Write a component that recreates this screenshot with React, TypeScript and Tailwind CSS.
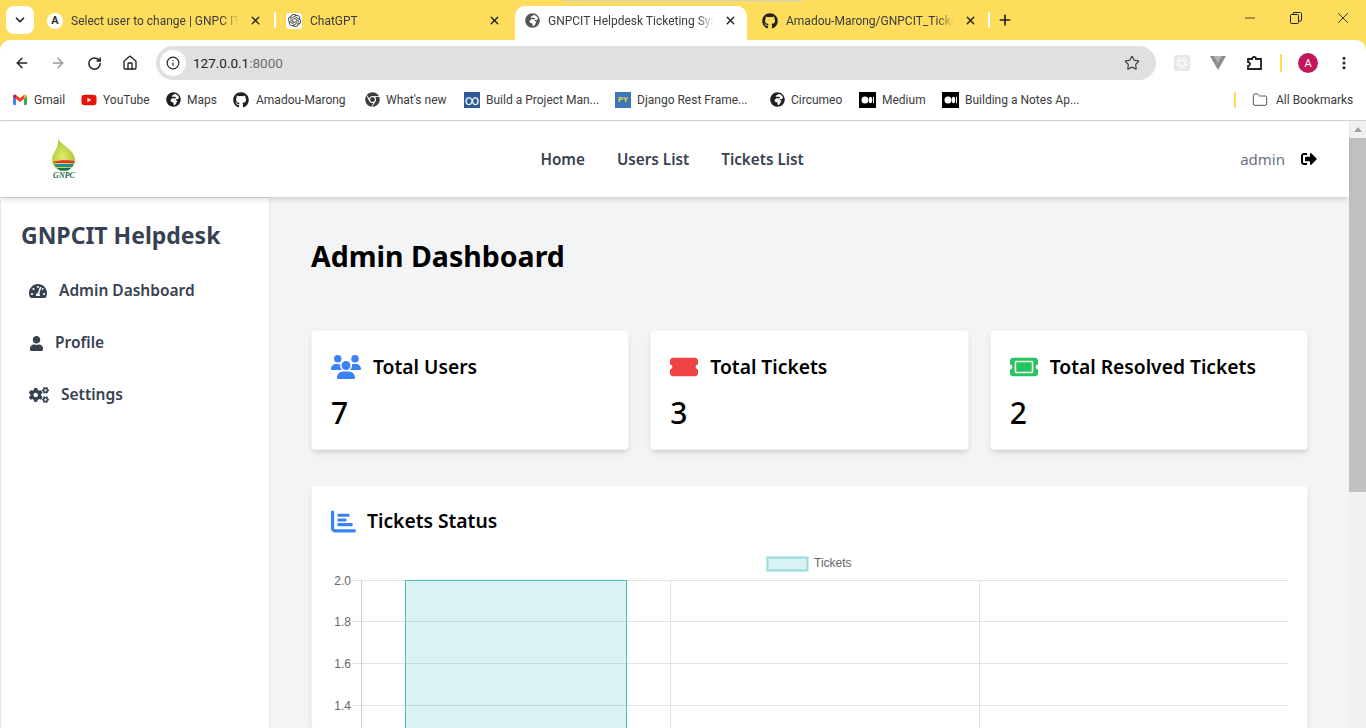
import { ReactNode } from 'react';
import {
  ArrowLeft,
  ArrowRight,
  ChevronDown,
  Folder,
  Home,
  Info,
  Minus,
  MoreVertical,
  Plus,
  RotateCw,
  Star,
  X,
} from 'lucide-react';
import {
  FaChrome,
  FaCogs,
  FaGithub,
  FaGlobeAfrica,
  FaSignOutAlt,
  FaTachometerAlt,
  FaUser,
} from 'react-icons/fa';
import { FaChartBar, FaTicket, FaTicketSimple, FaUsers, FaYoutube } from 'react-icons/fa6';
import { SiOpenai } from 'react-icons/si';

const MediumIcon = () => (
  <svg width="17" height="16" viewBox="0 0 17 16">
    <rect width="17" height="16" fill="#000" />
    <circle cx="6" cy="8" r="3.500" fill="#fff" />
    <ellipse cx="11.500" cy="8" rx="1.700" ry="3.300" fill="#fff" />
    <rect x="14" y="4.800" width="1" height="6.400" fill="#fff" />
  </svg>
);

const GlobeIcon = () => <FaGlobeAfrica size={15} className="text-[#1f1f1f]" />;

const GmailIcon = () => (
  <svg width="14" height="11" viewBox="0 0 14 11">
    <path d="M0 2v8a1 1 0 0 0 1 1h2V4z" fill="#4285f4" />
    <path d="M14 2v8a1 1 0 0 1-1 1h-2V4z" fill="#34a853" />
    <path d="M3 5V1L7 4l4-3v4L7 8z" fill="#ea4335" />
    <path d="M0 2.500C0 .8 2 0 3 1v4z" fill="#c5221f" />
    <path d="M14 2.500C14 .8 12 0 11 1v4z" fill="#fbbc04" />
  </svg>
);

const bookmarks: { label: string; width: string; gap: string; icon: ReactNode }[] = [
  { label: 'Gmail', width: 'w-[30px]', gap: 'gap-[7px]', icon: <GmailIcon /> },
  { label: 'YouTube', width: 'w-[46px]', gap: 'gap-[6px]', icon: <FaYoutube size={16} className="text-[#e8120c]" /> },
  { label: 'Maps', width: 'w-[29px]', gap: 'gap-[6px]', icon: <GlobeIcon /> },
  { label: 'Amadou-Marong', width: 'w-[92px]', gap: 'gap-[7px]', icon: <FaGithub size={16} className="text-[#1f1f1f]" /> },
  { label: "What's new", width: 'w-[61px]', gap: 'gap-[6px]', icon: <FaChrome size={15} className="text-[#3c3c3c]" /> },
  {
    label: 'Build a Project Man...',
    width: 'w-[112px]',
    gap: 'gap-[6px]',
    icon: (
      <span className="flex h-[16px] w-[16px] items-center justify-center bg-[#2f5a96] text-[14px] leading-none text-white">
        ∞
      </span>
    ),
  },
  {
    label: 'Django Rest Frame...',
    width: 'w-[116px]',
    gap: 'gap-[6px]',
    icon: (
      <span className="flex h-[16px] w-[16px] items-center justify-center bg-[#3b78b5] text-[8px] font-bold leading-none text-[#f2d14b]">
        PY
      </span>
    ),
  },
  { label: 'Circumeo', width: 'w-[51px]', gap: 'gap-[6px]', icon: <GlobeIcon /> },
  { label: 'Medium', width: 'w-[43px]', gap: 'gap-[6px]', icon: <MediumIcon /> },
  { label: 'Building a Notes Ap...', width: 'w-[114px]', gap: 'gap-[6px]', icon: <MediumIcon /> },
];

function Tab({ title, width, active, icon }: { title: string; width: string; active?: boolean; icon: ReactNode }) {
  return (
    <div className={`flex h-[34px] shrink-0 items-center pb-[5px] ${width} ${active ? 'rounded-t-[10px] bg-white' : ''}`}>
      <span className="ml-[9px] flex h-[16px] w-[16px] shrink-0 items-center justify-center">{icon}</span>
      <span className="ml-[8px] min-w-0 flex-1 whitespace-nowrap text-[12px] text-[#3b3b3b] [mask-image:linear-gradient(to_right,black_90%,transparent)]">
        {title}
      </span>
      <X size={13} strokeWidth={2.5} className="mx-[10px] shrink-0 text-[#222]" />
    </div>
  );
}

function BrowserChrome() {
  return (
    <div className="relative shrink-0 bg-[#ffdd5c] font-['Roboto',sans-serif]">
      <div className="absolute left-[564px] top-0 h-px w-[240px] bg-[#cfcfcf]" />
      <div className="flex h-[40px] items-end pl-[6px]">
        <div className="mb-[6px] flex h-[28px] w-[28px] items-center justify-center rounded-[8px] bg-white">
          <ChevronDown size={14} strokeWidth={3} className="text-[#222]" />
        </div>
        <Tab
          title="Select user to change | GNPC IT"
          width="w-[234px] ml-[4px] mr-[2px]"
          icon={
            <span className="flex h-[16px] w-[16px] items-center justify-center rounded-full bg-white text-[11px] font-bold leading-none text-[#333]">
              A
            </span>
          }
        />
        <div className="mb-[12px] h-[16px] w-[2px] bg-white" />
        <Tab
          title="ChatGPT"
          width="w-[234px] mr-[4px] ml-[1px]"
          icon={
            <span className="flex h-[16px] w-[16px] items-center justify-center rounded-[3px] bg-white">
              <SiOpenai size={13} className="text-[#333]" />
            </span>
          }
        />
        <Tab
          title="GNPCIT Helpdesk Ticketing Syst"
          width="w-[232px] mr-[6px]"
          active
          icon={<FaGlobeAfrica size={15} className="text-[#555]" />}
        />
        <Tab
          title="Amadou-Marong/GNPCIT_Ticke"
          width="w-[234px] mr-[1px]"
          icon={<FaGithub size={16} className="text-[#222]" />}
        />
        <div className="mb-[12px] h-[16px] w-[2px] bg-white" />
        <Plus size={16} strokeWidth={2.5} className="mb-[12px] ml-[7px] text-[#222]" />
        <div className="ml-auto mb-[13px] flex items-center">
          <Minus size={16} strokeWidth={1.2} className="mr-[32px] text-[#222]" />
          <svg width="12" height="12" viewBox="0 0 12 12" className="mr-[32px]" fill="none" stroke="#222">
            <rect x="0.5" y="2.5" width="8" height="9" rx="1" />
            <path d="M3 2.500V1.500a1 1 0 0 1 1-1h6.500a1 1 0 0 1 1 1V8a1 1 0 0 1-1 1H8.500" />
          </svg>
          <X size={18} strokeWidth={1.2} className="mr-[14px] text-[#222]" />
        </div>
      </div>
      <div className="rounded-t-[10px] bg-white">
        <div className="flex h-[46px] items-center">
          <ArrowLeft size={16} strokeWidth={2.2} className="ml-[14px] text-[#222]" />
          <ArrowRight size={16} strokeWidth={2.2} className="ml-[20px] text-[#9a9a9a]" />
          <RotateCw size={15} strokeWidth={2.4} className="ml-[21px] text-[#222]" />
          <Home size={16} strokeWidth={2} className="ml-[20px] text-[#222]" />
          <div className="ml-[18px] flex h-[34px] w-[1000px] items-center rounded-full bg-[#e0e0e0] pl-[4px] pr-[16px]">
            <span className="flex h-[26px] w-[26px] items-center justify-center rounded-full bg-white">
              <Info size={14} className="text-[#222]" />
            </span>
            <span className="ml-[7px] text-[13.500px] text-[#6d6d6d]">
              <span className="text-[#222]">127.0.0.1</span>:8000
            </span>
            <Star size={16} strokeWidth={1.8} className="ml-auto text-[#444]" />
          </div>
          <svg width="16" height="16" viewBox="0 0 16 16" className="ml-[18px]" fill="none" stroke="#fff" strokeWidth="0.8">
            <rect width="16" height="16" rx="2" fill="#e6e6e6" stroke="none" />
            <ellipse cx="8" cy="8" rx="6.500" ry="2.500" />
            <ellipse cx="8" cy="8" rx="6.500" ry="2.500" transform="rotate(60 8 8)" />
            <ellipse cx="8" cy="8" rx="6.500" ry="2.500" transform="rotate(120 8 8)" />
          </svg>
          <svg width="16" height="16" viewBox="0 0 16 16" className="ml-[20px]">
            <path d="M0 1h16L8 15z" fill="#8c8c8c" />
            <path d="M4 1h8L8 8z" fill="#b5b5b5" />
          </svg>
          <svg width="18" height="18" viewBox="0 0 18 18" className="ml-[20px]" fill="none" stroke="#222" strokeWidth="1.8">
            <path d="M2 5h4a2 2 0 0 1 4 0h5v10H2v-3a2 2 0 0 0 0-4z" />
          </svg>
          <span className="ml-[16px] h-[18px] w-[2px] bg-[#ffdd5c]" />
          <span className="ml-[16px] flex h-[20px] w-[20px] items-center justify-center rounded-full bg-[#c2185b] text-[11px] leading-none text-white">
            A
          </span>
          <MoreVertical size={16} strokeWidth={2.6} className="ml-[18px] text-[#222]" />
        </div>
        <div className="flex h-[35px] items-center border-b border-[#d0d0d0] pb-[7px] pl-[13px]">
          {bookmarks.map(({ label, width, gap, icon }) => (
            <div key={label} className={`mr-[17px] flex items-center ${gap}`}>
              <span className="flex h-[16px] items-center justify-center">{icon}</span>
              <span className={`whitespace-nowrap text-[12px] text-[#3b3b3b] ${width}`}>{label}</span>
            </div>
          ))}
          <span className="ml-auto h-[16px] w-[2px] bg-[#ffdd5c]" />
          <Folder size={16} strokeWidth={1.5} className="ml-[16px] text-[#555]" />
          <span className="ml-[8px] mr-[14px] w-[76px] whitespace-nowrap text-[12px] text-[#3b3b3b]">All Bookmarks</span>
        </div>
      </div>
    </div>
  );
}

function Logo() {
  return (
    <div className="ml-[24px] flex h-[52px] w-[80px] flex-col items-center justify-center">
      <svg width="24" height="33" viewBox="0 0 24 33">
        <defs>
          <radialGradient id="drop" cx="0.45" cy="0.6" r="0.6">
            <stop offset="0" stopColor="#e6ea70" />
            <stop offset="1" stopColor="#a5c52d" />
          </radialGradient>
        </defs>
        <path d="M6 0C8 7 23 11 23 22a11.500 11 0 0 1-23 0C0 14 8 10 6 0z" fill="url(#drop)" />
        <path d="M1 24c5-2 15-2 22-1l-1 2H2z" fill="#e0342c" />
        <path d="M2 26h20l-2 3H4z" fill="#1f8fa0" />
        <path d="M5 30h14l-3 2.500H8z" fill="#16703f" />
      </svg>
      <span className="mt-px font-['Liberation_Serif',serif] text-[8px] font-bold italic leading-[8px] text-[#1c6b3c]">
        GNPC
      </span>
    </div>
  );
}

const sideLinks = [
  { label: 'Admin Dashboard', icon: <FaTachometerAlt size={18} />, gap: 'gap-[12px]' },
  { label: 'Profile', icon: <FaUser size={15} />, gap: 'gap-[11px]' },
  { label: 'Settings', icon: <FaCogs size={20} />, gap: 'gap-[12px]' },
];

function Sidebar() {
  return (
    <aside className="w-[270px] shrink-0 border-l border-r border-t border-[#e5e7eb] bg-white pl-[20px]">
      <h2 className="mt-[18px] text-[23px] font-bold leading-[38px] text-[#374151]">GNPCIT Helpdesk</h2>
      <ul className="mt-[25px] ml-[8px] flex flex-col gap-[28px]">
        {sideLinks.map(({ label, icon, gap }) => (
          <li key={label} className={`flex h-[24px] items-center text-[15.500px] font-semibold text-[#374151] ${gap}`}>
            {icon}
            {label}
          </li>
        ))}
      </ul>
    </aside>
  );
}

const stats = [
  { label: 'Total Users', value: 7, icon: <FaUsers size={30} className="text-[#3b82f6]" /> },
  { label: 'Total Tickets', value: 3, icon: <FaTicketSimple size={28} className="text-[#ef4444]" /> },
  { label: 'Total Resolved Tickets', value: 2, icon: <FaTicket size={28} className="text-[#22c55e]" /> },
];

function TicketsChart() {
  const rows = [
    { y: 580.5, label: '2.0' },
    { y: 621.5, label: '1.8' },
    { y: 663.5, label: '1.6' },
    { y: 705.5, label: '1.4' },
  ];
  // svg starts at x 331, y 555 of the page
  return (
    <svg width="957" height="173" viewBox="331 555 957 173" className="mt-[18px] block font-['Liberation_Sans',sans-serif]">
      <rect x="767.500" y="557.500" width="40" height="13" fill="#d9f2f2" stroke="#93dada" strokeWidth="2" />
      <text x="814" y="567" fontSize="12" fill="#666">
        Tickets
      </text>
      {rows.map(({ y, label }) => (
        <g key={label}>
          <line x1="352" x2="1288" y1={y} y2={y} stroke="#e2e2e2" />
          <text x="351" y={y + 4} fontSize="12" fill="#666" textAnchor="end">
            {label}
          </text>
        </g>
      ))}
      <line x1="361.500" x2="361.500" y1="580" y2="728" stroke="#cfcfcf" />
      <line x1="670.500" x2="670.500" y1="580" y2="728" stroke="#e2e2e2" />
      <line x1="979.500" x2="979.500" y1="580" y2="728" stroke="#e2e2e2" />
      <rect x="405.500" y="580.500" width="221" height="160" fill="#4bc0c0" fillOpacity="0.2" stroke="#4bc0c0" />
    </svg>
  );
}

function Dashboard() {
  return (
    <main className="min-w-0 flex-1 overflow-hidden bg-[#f3f4f6] pl-[41px] pr-[41px] pt-[41px]">
      <h1 className="text-[28.500px] font-bold leading-[36px] text-black">Admin Dashboard</h1>
      <div className="mt-[56px] grid grid-cols-3 gap-[21px]">
        {stats.map(({ label, value, icon }) => (
          <div key={label} className="h-[120px] rounded-[4px] border border-gray-100 bg-white p-[19px] shadow-md">
            <div className="mt-[2px] flex h-[30px] items-center gap-[12px]">
              {icon}
              <span className="text-[19.250px] font-semibold leading-[28px] text-black">{label}</span>
            </div>
            <p className="mt-[13px] text-[30px] font-medium leading-[36px] text-black">{value}</p>
          </div>
        ))}
      </div>
      <div className="mt-[35px] rounded-[4px] border border-gray-100 bg-white px-[19px] pt-[19px] shadow-md">
        <div className="flex h-[32px] items-center gap-[11px]">
          <FaChartBar size={25} className="text-[#3b82f6]" />
          <span className="text-[19.250px] font-semibold leading-[28px] text-black">Tickets Status</span>
        </div>
        <TicketsChart />
      </div>
    </main>
  );
}

export default function App() {
  return (
    <div className="flex h-[728px] w-[1366px] flex-col overflow-hidden bg-white font-['Noto_Sans',sans-serif]">
      <BrowserChrome />
      <div className="flex min-h-0 flex-1">
        <div className="flex min-w-0 flex-1 flex-col">
          <header className="relative z-10 flex h-[76px] shrink-0 items-center justify-between bg-white pr-[32px] shadow-md">
            <Logo />
            <nav className="flex items-center gap-[32px] text-[15.250px] font-semibold text-[#374151]">
              <span>Home</span>
              <span>Users List</span>
              <span>Tickets List</span>
            </nav>
            <div className="flex items-center gap-[16px] text-[#6b7280]">
              <span className="text-[15px]">admin</span>
              <FaSignOutAlt size={16} className="text-black" />
            </div>
          </header>
          <div className="flex min-h-0 flex-1">
            <Sidebar />
            <Dashboard />
          </div>
        </div>
        <div className="flex w-[17px] shrink-0 flex-col items-center bg-[#f1f1f1]">
          <span className="mt-[6px] h-0 w-0 border-x-[4px] border-b-[5px] border-x-transparent border-b-[#a3a3a3]" />
          <div className="mt-[6px] h-[354px] w-full bg-[#c1c1c1]" />
        </div>
      </div>
    </div>
  );
}
